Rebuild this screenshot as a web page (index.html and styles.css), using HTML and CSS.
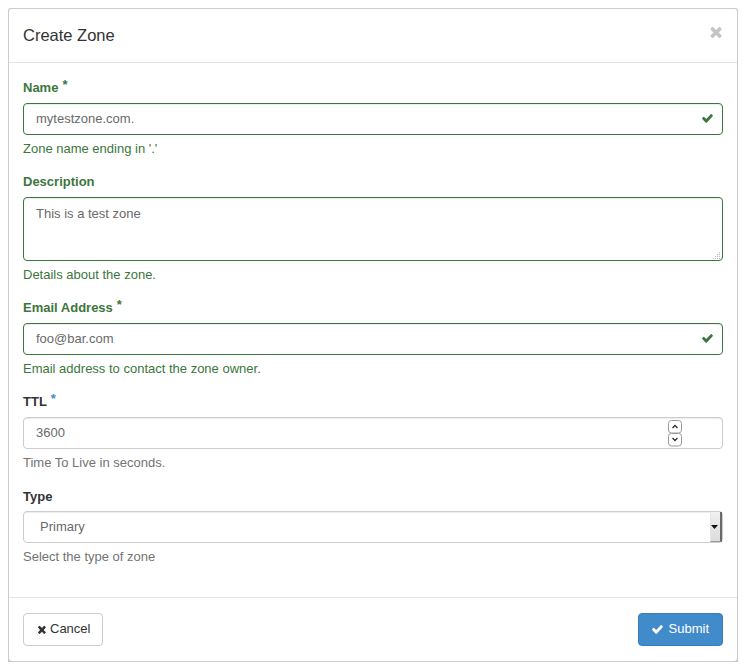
FILE: index.html
```html
<!DOCTYPE html>
<html>
<head>
<meta charset="utf-8">
<title>Create Zone</title>
<link rel="stylesheet" href="styles.css">
</head>
<body>
<div class="modal">
  <div class="modal-header">
    <h4 class="modal-title">Create Zone</h4>
    <span class="close">
      <svg width="13" height="12" viewBox="150 250 1370 1310" preserveAspectRatio="none"><path fill="#c4c4c4" d="M1490 1322q0 40-28 68l-136 136q-28 28-68 28t-68-28l-294-294-294 294q-28 28-68 28t-68-28l-136-136q-28-28-28-68t28-68l294-294-294-294q-28-28-28-68t28-68l136-136q28-28 68-28t68 28l294 294 294-294q28-28 68-28t68 28l136 136q28 28 28 68t-28 68l-294 294 294 294q28 28 28 68z"/></svg>
    </span>
  </div>
  <div class="modal-body">
    <div class="form-group success">
      <label class="control-label">Name<span class="req">*</span></label>
      <div class="field">
        <input class="form-control" type="text" value="mytestzone.com.">
        <span class="feedback"><svg width="11" height="9" viewBox="110 340 1580 1200" preserveAspectRatio="none"><path fill="#3c763d" d="M1671 566q0 40-28 68l-724 724-136 136q-28 28-68 28t-68-28l-136-136-362-362q-28-28-28-68t28-68l136-136q28-28 68-28t68 28l294 295 656-657q28-28 68-28t68 28l136 136q28 28 28 68z"/></svg></span>
      </div>
      <p class="help-block">Zone name ending in '.'</p>
    </div>
    <div class="form-group success">
      <label class="control-label">Description</label>
      <div class="field">
        <textarea class="form-control area">This is a test zone</textarea>
        <span class="grip"><svg width="8" height="8" viewBox="0 0 8 8"><g fill="#bdbdbd"><rect x="6" y="0" width="1" height="1"/><rect x="4" y="2" width="1" height="1"/><rect x="6" y="2" width="1" height="1"/><rect x="2" y="4" width="1" height="1"/><rect x="4" y="4" width="1" height="1"/><rect x="6" y="4" width="1" height="1"/><rect x="0" y="6" width="1" height="1"/><rect x="2" y="6" width="1" height="1"/><rect x="4" y="6" width="1" height="1"/><rect x="6" y="6" width="1" height="1"/></g></svg></span>
      </div>
      <p class="help-block">Details about the zone.</p>
    </div>
    <div class="form-group success">
      <label class="control-label">Email Address<span class="req">*</span></label>
      <div class="field">
        <input class="form-control" type="text" value="foo@bar.com">
        <span class="feedback"><svg width="11" height="9" viewBox="110 340 1580 1200" preserveAspectRatio="none"><path fill="#3c763d" d="M1671 566q0 40-28 68l-724 724-136 136q-28 28-68 28t-68-28l-136-136-362-362q-28-28-28-68t28-68l136-136q28-28 68-28t68 28l294 295 656-657q28-28 68-28t68 28l136 136q28 28 28 68z"/></svg></span>
      </div>
      <p class="help-block">Email address to contact the zone owner.</p>
    </div>
    <div class="form-group">
      <label class="control-label">TTL<span class="req blue">*</span></label>
      <div class="field">
        <input class="form-control" type="text" value="3600">
        <span class="spinner"><svg width="14" height="27" viewBox="0 0 14 27"><rect x="0.5" y="0.5" width="13" height="12.5" rx="3" fill="#fff" stroke="#9a9a9a"/><rect x="0.5" y="13.5" width="13" height="12.5" rx="3" fill="#fff" stroke="#9a9a9a"/><path d="M4.5 8 L7 5.5 L9.5 8" fill="none" stroke="#333" stroke-width="1.4"/><path d="M4.5 18 L7 20.5 L9.5 18" fill="none" stroke="#333" stroke-width="1.4"/></svg></span>
      </div>
      <p class="help-block">Time To Live in seconds.</p>
    </div>
    <div class="form-group">
      <label class="control-label">Type</label>
      <div class="field">
        <select class="form-control select"><option>Primary</option></select>
        <span class="select-arrow"><svg width="7" height="4" viewBox="0 0 7 4"><path d="M0 0 L7 0 L3.5 4 Z" fill="#111"/></svg></span>
      </div>
      <p class="help-block">Select the type of zone</p>
    </div>
  </div>
  <div class="modal-footer">
    <button class="btn btn-default"><svg width="9" height="9" viewBox="150 250 1370 1310" preserveAspectRatio="none"><path fill="#333" d="M1490 1322q0 40-28 68l-136 136q-28 28-68 28t-68-28l-294-294-294 294q-28 28-68 28t-68-28l-136-136q-28-28-28-68t28-68l294-294-294-294q-28-28-28-68t28-68l136-136q28-28 68-28t68 28l294 294 294-294q28-28 68-28t68 28l136 136q28 28 28 68t-28 68l-294 294 294 294q28 28 28 68z"/></svg>Cancel</button>
    <button class="btn btn-primary"><svg width="11" height="9" viewBox="110 340 1580 1200" preserveAspectRatio="none"><path fill="#fff" d="M1671 566q0 40-28 68l-724 724-136 136q-28 28-68 28t-68-28l-136-136-362-362q-28-28-28-68t28-68l136-136q28-28 68-28t68 28l294 295 656-657q28-28 68-28t68 28l136 136q28 28 28 68z"/></svg>Submit</button>
  </div>
</div>
</body>
</html>
```

FILE: styles.css
```css
* { box-sizing: border-box; }
html, body { background: #fff; }
body {
  margin: 8px;
  font-family: "Liberation Sans", Arial, Helvetica, sans-serif;
  font-size: 13px;
  line-height: 1.42857;
  color: #333;
}
.modal {
  width: 730px;
  background: #fff;
  border: 1px solid rgba(0,0,0,.2);
  border-radius: 4px;
  box-shadow: 0 3px 9px rgba(0,0,0,.5);
}
.modal-header {
  display: flex;
  justify-content: space-between;
  align-items: flex-start;
  padding: 15px 15px 15px 14px;
  border-bottom: 1px solid #e5e5e5;
}
.modal-title {
  margin: 0;
  font-size: 16.5px;
  font-weight: normal;
  line-height: 23px;
  color: #333;
}
.close {
  display: flex;
  margin-top: 2px;
  margin-right: 0;
}
.modal-body {
  padding: 16px 14px 15px 14px;
}
.form-group {
  margin-bottom: 15px;
}
.control-label {
  display: block;
  font-weight: bold;
  margin-bottom: 5px;
  color: #333;
}
.success .control-label,
.success .help-block { color: #3c763d; }
.req {
  display: inline-block;
  vertical-align: top;
  line-height: 12px;
  font-size: 13px;
  margin-left: 4px;
  color: #3c763d;
}
.req.blue { color: #428bca; }
.field {
  position: relative;
}
.form-control {
  display: block;
  width: 100%;
  height: 32px;
  padding: 6px 12px;
  font-family: inherit;
  font-size: 13px;
  line-height: 1.42857;
  color: #6a6a6a;
  background: #fff;
  border: 1px solid #ccc;
  border-radius: 4px;
  box-shadow: inset 0 1px 1px rgba(0,0,0,.075);
  outline: none;
}
.success .form-control { border-color: #3c763d; }
.area {
  height: 64px;
  resize: none;
  padding-top: 7px;
}
.select {
  appearance: none;
  -webkit-appearance: none;
  padding-left: 16px;
}
.feedback {
  position: absolute;
  right: 10px;
  top: 11px;
  display: flex;
}
.grip {
  position: absolute;
  right: 2px;
  bottom: 1px;
  display: flex;
}
.spinner {
  position: absolute;
  right: 41px;
  top: 3px;
  display: flex;
}
.select-arrow {
  position: absolute;
  right: 1px;
  top: 1px;
  bottom: 1px;
  width: 12px;
  display: flex;
  align-items: center;
  justify-content: center;
  padding-right: 2px;
  background: linear-gradient(#f0f0f0, #dcdcdc);
  border-right: 2px solid #6a6a6a;
  border-bottom: 1px solid #9a9a9a;
  border-left: 1px solid #e4e4e4;
}
.help-block {
  margin: 5px 0 10px;
  color: #737373;
}
.modal-footer {
  display: flex;
  justify-content: space-between;
  padding: 15px 14px 15px 14px;
  border-top: 1px solid #e5e5e5;
}
.btn {
  display: inline-flex;
  align-items: center;
  gap: 5px;
  height: 33px;
  padding: 6px 12px;
  font-family: inherit;
  font-size: 13px;
  line-height: 1.42857;
  border: 1px solid transparent;
  border-radius: 4px;
}
.btn-default {
  background: #fff;
  border-color: #ccc;
  color: #333;
  padding-left: 13px;
  gap: 4px;
}
.btn-primary {
  background: #428bca;
  border-color: #357ebd;
  color: #fff;
  padding: 6px 13px;
  gap: 6px;
}
```
